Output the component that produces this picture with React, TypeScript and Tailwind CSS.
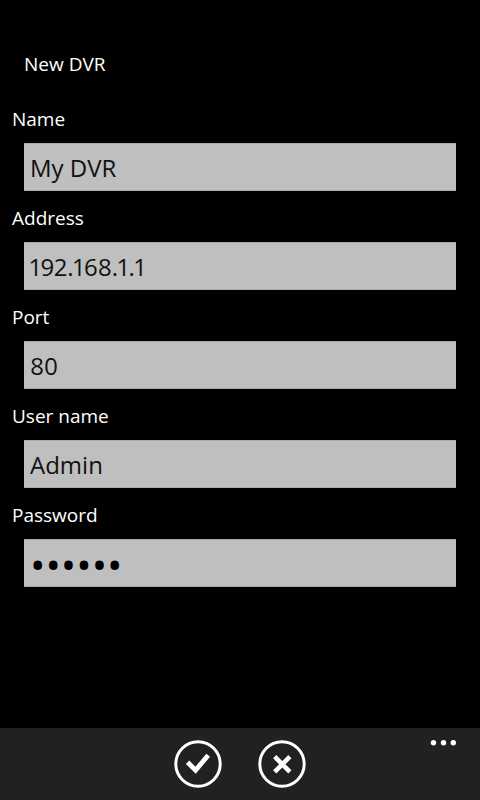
import React, { useState } from "react";

interface FieldProps {
  id: string;
  label: string;
  value: string;
  type?: "text" | "password";
  onChange: (value: string) => void;
}

const Field: React.FC<FieldProps> = ({
  id,
  label,
  value,
  type = "text",
  onChange,
}) => {
  return (
    <div>
      <label htmlFor={id} className="block px-3 text-[19px] leading-7">
        {label}
      </label>
      <div className="px-6 pt-2.5 pb-[13px]">
        <input
          id={id}
          type={type}
          value={value}
          onChange={(e) => onChange(e.target.value)}
          className={`block h-12 w-full border-y border-[#aaaaaa] bg-[#bfbfbf] px-1.5 outline-none ${
            type === "password"
              ? "pt-1 text-[41px] text-black"
              : "text-[24px] text-[#111111] proportional-nums"
          }`}
        />
      </div>
    </div>
  );
};

interface AppBarButtonProps {
  label: string;
  children: React.ReactNode;
}

const AppBarButton: React.FC<AppBarButtonProps> = ({ label, children }) => {
  return (
    <button type="button" aria-label={label} className="h-12 w-12">
      <svg viewBox="0 0 48 48" fill="none" stroke="#fff" className="h-12 w-12">
        <circle cx="24" cy="24" r="22.2" strokeWidth="3" />
        {children}
      </svg>
    </button>
  );
};

export default function App() {
  const [dvr, setDvr] = useState({
    name: "My DVR",
    address: "192.168.1.1",
    port: "80",
    user: "Admin",
    password: "secret",
  });

  const update = (field: keyof typeof dvr) => (value: string) =>
    setDvr((prev) => ({ ...prev, [field]: value }));

  return (
    <div className="flex min-h-screen flex-col bg-black font-['Open_Sans','Noto_Sans',sans-serif] text-white">
      <main className="flex-1 pt-[50px]">
        <h1 className="px-6 pb-[27px] text-[19px] leading-7">New DVR</h1>
        <form>
          <Field id="name" label="Name" value={dvr.name} onChange={update("name")} />
          <Field id="address" label="Address" value={dvr.address} onChange={update("address")} />
          <Field id="port" label="Port" value={dvr.port} onChange={update("port")} />
          <Field id="user" label="User name" value={dvr.user} onChange={update("user")} />
          <Field
            id="password"
            label="Password"
            type="password"
            value={dvr.password}
            onChange={update("password")}
          />
        </form>
      </main>

      <footer className="grid h-[72px] grid-cols-[1fr_auto_1fr] bg-[#212121]">
        <div />
        <div className="flex gap-9 pt-3">
          <AppBarButton label="Save">
            <path d="M13.6 22.2l8 8L34.2 15.2" strokeWidth="4.8" />
          </AppBarButton>
          <AppBarButton label="Cancel">
            <path d="M16.7 16.7l15.2 15.2M31.9 16.7l-15.2 15.2" strokeWidth="4.5" />
          </AppBarButton>
        </div>
        <button
          type="button"
          aria-label="More"
          className="mt-3 mr-6 flex h-6 w-7 items-start justify-self-end"
        >
          <svg viewBox="0 0 28 6" fill="#fff" className="h-1.5 w-7">
            <circle cx="5.5" cy="2.7" r="2.7" />
            <circle cx="15.5" cy="2.7" r="2.7" />
            <circle cx="25.3" cy="2.7" r="2.7" />
          </svg>
        </button>
      </footer>
    </div>
  );
}
